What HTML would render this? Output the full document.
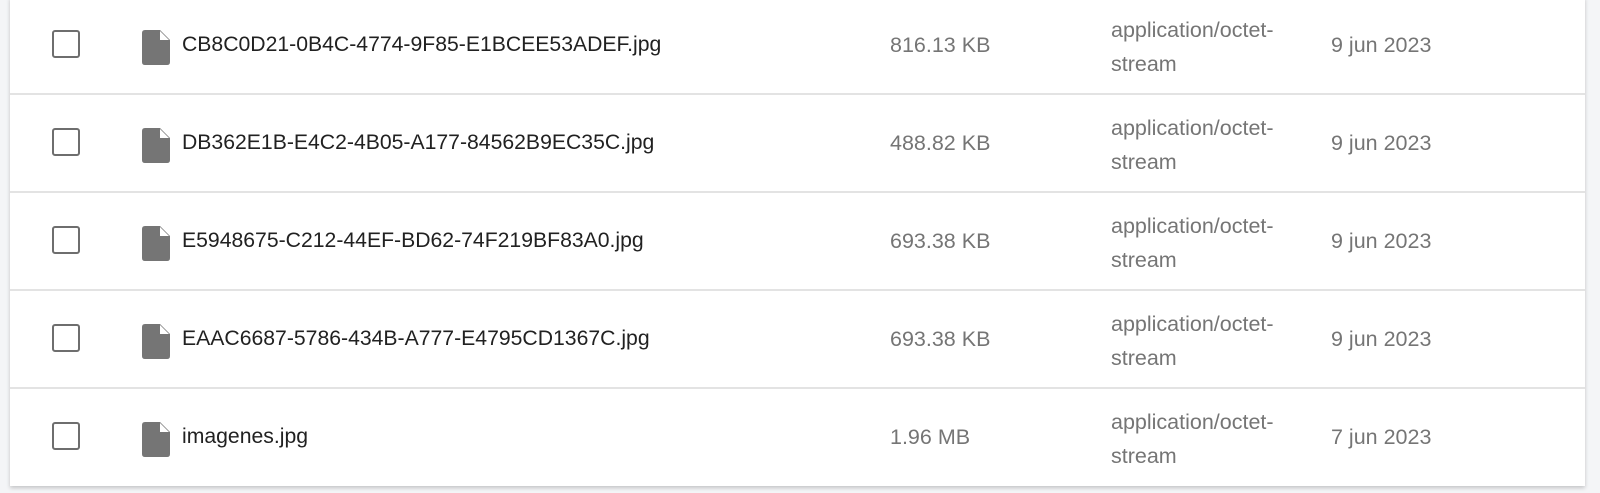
<!DOCTYPE html><html><head><style>
body{margin:0;width:1600px;height:493px;background:#f4f5f7;font-family:"Liberation Sans",sans-serif;overflow:hidden;position:relative}
.card{position:absolute;left:10px;top:-3px;width:1575px;height:489px;background:#fff;box-shadow:0 2px 4px rgba(0,0,0,.2)}
.row{position:relative;height:98px;border-bottom:2px solid #e3e3e3;box-sizing:border-box}
.row:last-child{border-bottom:none}
.cb{position:absolute;left:42px;top:33px;width:28px;height:28px;border:2.5px solid #6e6e6e;border-radius:3px;box-sizing:border-box}
.ic{position:absolute;left:131px;top:33px}
.nm{position:absolute;left:172px;top:36px;font-size:21.2px;color:#212121}
.sz{position:absolute;left:880px;top:36px;font-size:21.5px;color:#757575}
.ty{position:absolute;left:1101px;top:16px;font-size:21.5px;color:#757575;line-height:34px}
.dt{position:absolute;left:1321px;top:36px;font-size:21.5px;color:#757575}
</style></head><body><div class="card">
<div class="row"><div class="cb"></div><svg class="ic" width="30" height="35" viewBox="0 0 28 35"><path d="M3 0H18L28 10V32Q28 35 25 35H3Q0 35 0 32V3Q0 0 3 0Z" fill="#757575"/><path d="M18 1V10H27Z" fill="#fff"/></svg><div class="nm">CB8C0D21-0B4C-4774-9F85-E1BCEE53ADEF.jpg</div><div class="sz">816.13 KB</div><div class="ty">application/octet-<br>stream</div><div class="dt">9 jun 2023</div></div>
<div class="row"><div class="cb"></div><svg class="ic" width="30" height="35" viewBox="0 0 28 35"><path d="M3 0H18L28 10V32Q28 35 25 35H3Q0 35 0 32V3Q0 0 3 0Z" fill="#757575"/><path d="M18 1V10H27Z" fill="#fff"/></svg><div class="nm">DB362E1B-E4C2-4B05-A177-84562B9EC35C.jpg</div><div class="sz">488.82 KB</div><div class="ty">application/octet-<br>stream</div><div class="dt">9 jun 2023</div></div>
<div class="row"><div class="cb"></div><svg class="ic" width="30" height="35" viewBox="0 0 28 35"><path d="M3 0H18L28 10V32Q28 35 25 35H3Q0 35 0 32V3Q0 0 3 0Z" fill="#757575"/><path d="M18 1V10H27Z" fill="#fff"/></svg><div class="nm">E5948675-C212-44EF-BD62-74F219BF83A0.jpg</div><div class="sz">693.38 KB</div><div class="ty">application/octet-<br>stream</div><div class="dt">9 jun 2023</div></div>
<div class="row"><div class="cb"></div><svg class="ic" width="30" height="35" viewBox="0 0 28 35"><path d="M3 0H18L28 10V32Q28 35 25 35H3Q0 35 0 32V3Q0 0 3 0Z" fill="#757575"/><path d="M18 1V10H27Z" fill="#fff"/></svg><div class="nm">EAAC6687-5786-434B-A777-E4795CD1367C.jpg</div><div class="sz">693.38 KB</div><div class="ty">application/octet-<br>stream</div><div class="dt">9 jun 2023</div></div>
<div class="row"><div class="cb"></div><svg class="ic" width="30" height="35" viewBox="0 0 28 35"><path d="M3 0H18L28 10V32Q28 35 25 35H3Q0 35 0 32V3Q0 0 3 0Z" fill="#757575"/><path d="M18 1V10H27Z" fill="#fff"/></svg><div class="nm">imagenes.jpg</div><div class="sz">1.96 MB</div><div class="ty">application/octet-<br>stream</div><div class="dt">7 jun 2023</div></div>
</div></body></html>
